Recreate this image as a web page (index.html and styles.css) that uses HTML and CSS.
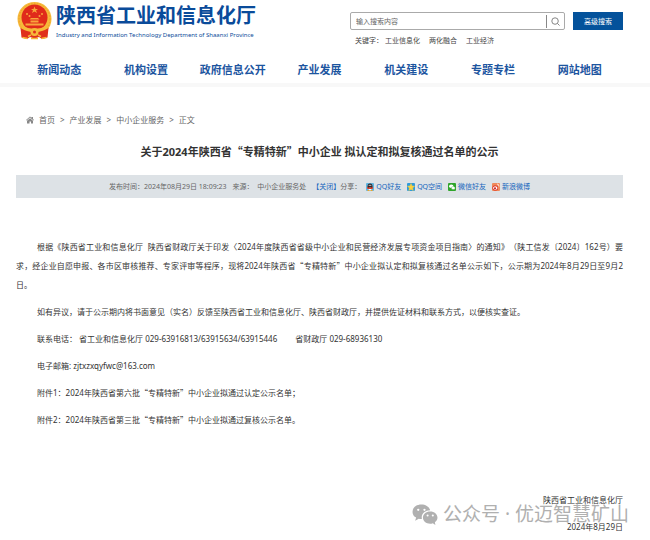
FILE: index.html
```html
<!DOCTYPE html>
<html lang="zh-CN">
<head>
    <meta charset="UTF-8">
    <meta name="viewport" content="width=device-width, initial-scale=1.0">
    <title>陕西省工业和信息化厅</title>
    <link rel="stylesheet" href="styles.css">
</head>
<body>
    <header class="site-header">
        <div class="container top">
            <a class="brand" href="#">
                <svg class="emblem" viewBox="0 0 74 76" aria-hidden="true">
                    <circle cx="37" cy="34" r="34" fill="#f6b93a"/>
                    <circle cx="37" cy="34" r="31" fill="none" stroke="#ee9f2c" stroke-width="2" stroke-dasharray="3 3"/>
                    <path d="M9 52 Q37 66 65 52 L63 71 L52 74 L46 70 L37 73 L28 70 L22 74 L11 71 Z" fill="#e0301c"/>
                    <circle cx="37" cy="31" r="26" fill="#e02a1b"/>
                    <path d="M37 9l2 5h5l-4 3 2 5-5-3-5 3 2-5-4-3h5z" fill="#f8a53c"/>
                    <g fill="#f8a53c">
                        <circle cx="22" cy="24" r="2"/>
                        <circle cx="27" cy="28" r="2"/>
                        <circle cx="47" cy="28" r="2"/>
                        <circle cx="52" cy="24" r="2"/>
                        <path d="M27 35l3-3h14l3 3zM29 37h16v4H29zM19 43h36v4H19z"/>
                    </g>
                    <path d="M12 47q25 14 50 0l1 6q-26 15-52 0z" fill="#f6b93a"/>
                    <circle cx="37" cy="60" r="8" fill="#f6b93a"/>
                    <circle cx="37" cy="60" r="3" fill="#e0301c"/>
                    <path d="M13 71l10 2M51 73l10-2M24 69l6-3M50 69l-6-3M30 73h14" stroke="#f6b93a" stroke-width="3"/>
                </svg>
                <span class="brand-text">
                    <span class="brand-name">陕西省工业和信息化厅</span>
                    <span class="brand-en">Industry and Information Technology Department of Shaanxi Province</span>
                </span>
            </a>
            <div class="search">
                <form class="search-form">
                    <div class="search-box">
                        <input type="text" class="search-input" placeholder="输入搜索内容" aria-label="输入搜索内容">
                        <button type="button" class="search-icon" aria-label="搜索">
                            <svg viewBox="0 0 10 10"><circle cx="4.5" cy="4.5" r="3.6"/><path d="M7.2 7.2L9.5 9.5"/></svg>
                        </button>
                    </div>
                    <button type="button" class="advanced">高级搜索</button>
                </form>
                <div class="keywords">
                    <span>关键字：</span>
                    <a href="#">工业信息化</a>
                    <a href="#">两化融合</a>
                    <a href="#">工业经济</a>
                </div>
            </div>
        </div>
        <nav class="container nav">
            <a href="#">新闻动态</a>
            <a href="#">机构设置</a>
            <a href="#">政府信息公开</a>
            <a href="#">产业发展</a>
            <a href="#">机关建设</a>
            <a href="#">专题专栏</a>
            <a href="#">网站地图</a>
        </nav>
    </header>

    <main class="container">
        <div class="breadcrumb">
            <svg class="home" viewBox="0 0 16 16" aria-hidden="true"><path d="M0 8L8 1l3 2.600V2h3v4l2 2-1 1-7-6-7 6z"/><path d="M2 9.500L8 4.500l6 5V15h-4v-4H7v4H2z"/></svg>
            <a href="#">首页</a><span>&gt;</span>
            <a href="#">产业发展</a><span>&gt;</span>
            <a href="#">中小企业服务</a><span>&gt;</span>
            <a href="#">正文</a>
        </div>

        <h1 class="title">关于2024年陕西省<span class="quoted">“专精特新”</span>中小企业 拟认定和拟复核通过名单的公示</h1>

        <div class="meta">
            <span>发布时间：2024年08月29日 18:09:23</span>
            <span class="source">来源：&nbsp; 中小企业服务处</span>
            <span><a href="#">【关闭】</a>分享：</span>
            <div class="share">
                <a href="#">
                    <svg viewBox="0 0 16 16"><rect width="16" height="16" rx="2" fill="#5fb4de"/><ellipse cx="8" cy="7" rx="5" ry="6" fill="#33262a"/><ellipse cx="8" cy="12" rx="3" ry="3" fill="#fff"/><path d="M2 8q6 3 12 0v3q-6 2-12 0z" fill="#e03a24"/><circle cx="6.500" cy="4.500" r="1.200" fill="#fff"/><circle cx="9.500" cy="4.500" r="1.200" fill="#fff"/><path d="M3 14h4v2H3zM9 14h4v2H9z" fill="#f5a623"/></svg>
                    QQ好友
                </a>
                <a href="#">
                    <svg viewBox="0 0 16 16"><rect width="16" height="16" rx="2" fill="#2f9bdc"/><path d="M8 1l2 5 5 .5-4 3.500 1.500 5L8 12.500 3.500 15 5 10 1 6.500 6 6z" fill="#ffd23c" stroke="#ffd23c"/></svg>
                    QQ空间
                </a>
                <a href="#">
                    <svg viewBox="0 0 16 16"><rect width="16" height="16" rx="2" fill="#2fa52b"/><ellipse cx="6.500" cy="6.500" rx="4.500" ry="3.500" fill="#fff"/><ellipse cx="10.500" cy="10" rx="4" ry="3" fill="#fff" stroke="#2fa52b" stroke-width=".7"/></svg>
                    微信好友
                </a>
                <a href="#">
                    <svg viewBox="0 0 16 16"><rect width="16" height="16" rx="2" fill="#f08a5b"/><rect x="1" y="5" width="11" height="10" rx="4" fill="#d9281c"/><ellipse cx="6.500" cy="10" rx="4.500" ry="3.500" fill="#fff"/><circle cx="6" cy="10.500" r="2.200" fill="#c22"/><path d="M10 2q4 0 4 5" fill="none" stroke="#fff" stroke-width="1.500"/></svg>
                    新浪微博
                </a>
            </div>
        </div>

        <article class="article">
            <p>根据《陕西省工业和信息化厅&nbsp; 陕西省财政厅关于印发〈2024年度陕西省省级中小企业和民营经济发展专项资金项目指南〉的通知》（陕工信发〔2024〕162号）要求，经企业自愿申报、各市区审核推荐、专家评审等程序，现将2024年陕西省<span class="quoted">“专精特新”</span>中小企业拟认定和拟复核通过名单公示如下，公示期为2024年8月29日至9月2日。</p>
            <p>如有异议，请于公示期内将书面意见（实名）反馈至陕西省工业和信息化厅、陕西省财政厅，并提供佐证材料和联系方式，以便核实查证。</p>
            <p>联系电话：&nbsp;省工业和信息化厅 029-63916813/63915634/63915446 &emsp;&emsp;省财政厅 029-68936130</p>
            <p>电子邮箱: zjtxzxqyfwc@163.com</p>
            <p>附件1：2024年陕西省第六批<span class="quoted">“专精特新”</span>中小企业拟通过认定公示名单；</p>
            <p>附件2：2024年陕西省第三批<span class="quoted">“专精特新”</span>中小企业拟通过复核公示名单。</p>
        </article>

        <div class="signature">
            <p>陕西省工业和信息化厅</p>
            <p>2024年8月29日</p>
            <div class="watermark">
                <svg viewBox="0 0 50 40" aria-hidden="true">
                    <path d="M18 1C8 1 1 7 1 15c0 5 3 9 7 11l-2 6 7-4c2 .5 4 .7 6 .5C17 19 25 12 35 12 33 5 26 1 18 1z"/>
                    <path d="M35 14c-8 0-14 5-14 12s6 12 14 12c2 0 3 0 5-1l5 3-1-5c3-2 5-5 5-9 0-7-6-12-14-12z"/>
                    <g fill="#fff"><circle cx="12" cy="11" r="2.200"/><circle cx="24" cy="11" r="2.200"/><circle cx="30" cy="22" r="2"/><circle cx="40" cy="22" r="2"/></g>
                </svg>
                <span>公众号 · 优迈智慧矿山</span>
            </div>
        </div>
    </main>
</body>
</html>
```

FILE: styles.css
```css
* {
    margin: 0;
    padding: 0;
    box-sizing: border-box;
}
body {
    background-color: #fff;
    color: #333;
    font-family: "Noto Sans", "Noto Sans CJK SC", sans-serif;
    font-size: 8px;
    line-height: 19px;
    text-spacing-trim: space-all;
}
a {
    color: inherit;
    text-decoration: none;
}
button, input {
    font-family: inherit;
}
.container {
    padding: 0 27px 0 16px;
}
/* full-width Chinese quotation marks */
.quoted {
    font-family: "Noto Sans CJK SC", sans-serif;
}

/* header */
.site-header {
    border-bottom: 4px solid #f8f8f8;
}
.top {
    display: flex;
    justify-content: space-between;
    height: 58px;
}
.brand {
    display: flex;
    gap: 3px;
    padding-top: 2px;
    color: #0a4b9a;
}
.emblem {
    width: 37px;
    height: 38px;
}
.brand-text {
    display: flex;
    flex-direction: column;
    padding-top: 2px;
    white-space: nowrap;
}
.brand-name {
    font-size: 20px;
    font-weight: bold;
    line-height: 24px;
}
.brand-en {
    font-size: 6px;
    line-height: 14px;
}
.search {
    width: 45%;
    max-width: 273px;
    padding-top: 12px;
}
.search-form {
    display: flex;
    gap: 8px;
}
.search-box {
    flex: 1;
    display: flex;
    align-items: center;
    height: 18px;
    border: 1px solid #aaa;
    border-radius: 2px;
}
.search-input {
    flex: 1;
    min-width: 0;
    padding: 0 5px;
    border: none;
    outline: none;
    background: none;
    font-size: 7px;
}
.search-input::placeholder {
    color: #666;
}
.search-icon {
    width: 18px;
    height: 13px;
    border: none;
    border-left: 1px solid #888;
    background: none;
    cursor: pointer;
}
.search-icon svg {
    display: block;
    width: 9px;
    height: 9px;
    margin: 0 auto;
    fill: none;
    stroke: #777;
}
.advanced {
    width: 50px;
    height: 18px;
    border: none;
    background-color: #04529b;
    color: #fff;
    font-size: 7px;
    cursor: pointer;
}
.keywords {
    display: flex;
    gap: 9px;
    padding-left: 5px;
    font-size: 7px;
    line-height: 21px;
    color: #444;
}
.keywords span {
    margin-right: -7px;
}
.nav {
    display: grid;
    grid-template-columns: repeat(7, 1fr);
    padding-bottom: 1px;
    text-align: center;
    color: #1c559f;
    font-size: 11px;
    font-weight: bold;
    line-height: 24px;
    white-space: nowrap;
}

/* article head */
.breadcrumb {
    display: flex;
    align-items: center;
    gap: 5px;
    padding: 23px 0 0 10px;
    color: #666;
}
.home {
    width: 8px;
    height: 8px;
    fill: #888;
}
.title {
    margin: 10px 0 11px;
    text-align: center;
    font-size: 11px;
    line-height: 24px;
}
.meta {
    display: flex;
    justify-content: center;
    padding: 2px 0;
    background-color: #dde2e6;
    color: #666;
    font-size: 7px;
    white-space: nowrap;
}
.meta a {
    color: #1464bd;
}
.source {
    margin: 0 6px;
}
.share {
    display: flex;
    gap: 6px;
    margin-left: 5px;
}
.share a {
    display: flex;
    align-items: center;
    gap: 2px;
}
.share svg {
    width: 8px;
    height: 8px;
}

/* article body */
.article {
    padding-top: 39px;
    text-align: justify;
}
.article p {
    margin-bottom: 8px;
    text-indent: 21px;
}
.signature {
    position: relative;
    padding-top: 53px;
    text-align: right;
}
.signature p + p {
    margin-top: 8px;
}
.watermark {
    position: absolute;
    right: -6px;
    bottom: 9px;
    display: flex;
    align-items: center;
    gap: 5px;
    color: #b0b0b0;
    font-size: 19px;
    line-height: 26px;
    white-space: nowrap;
}
.watermark svg {
    width: 26px;
    height: 21px;
    fill: #b0b0b0;
}
```
